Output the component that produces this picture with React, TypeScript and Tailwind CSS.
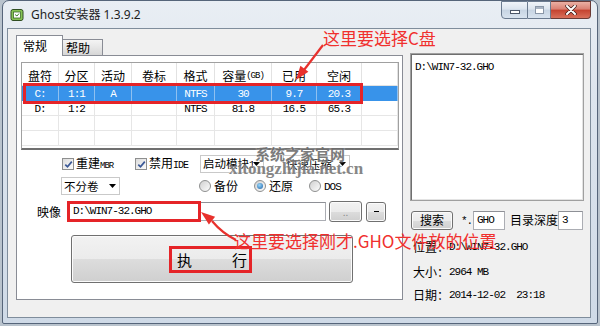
import React from "react";

const mono = "font-['Liberation_Mono',monospace] tracking-[-1px]";
const btn =
  "border border-[#707070] rounded-[3px] bg-[linear-gradient(to_bottom,#f2f2f2_0%,#ebebeb_50%,#dddddd_50%,#cfcfcf_100%)] shadow-[inset_0_0_0_1px_#fbfbfb]";
const input = "bg-white border border-[#abadb3] border-t-[#8e9096]";

function M({ children }: { children: React.ReactNode }) {
  return <span className={mono + " text-[11px]"}>{children}</span>;
}

function Check({ label }: { label: React.ReactNode }) {
  return (
    <div className="flex items-center">
      <div className="w-[12px] h-[12px] border border-[#8e8f8f] bg-[linear-gradient(135deg,#dcdcdc,#fbfbfb)] flex items-center justify-center">
        <svg width="9" height="9" viewBox="0 0 9 9">
          <path d="M1.3 4.6 L3.5 6.8 L7.8 1.6" stroke="#3a5896" strokeWidth="1.7" fill="none" />
        </svg>
      </div>
      <span className="ml-[2px] leading-[14px]">{label}</span>
    </div>
  );
}

function Drop({ className, label }: { className: string; label: React.ReactNode }) {
  return (
    <div className={"h-[18px] bg-white border border-[#c9c9c9] flex items-center pl-[2px] pr-[3px] text-[11.5px] " + className}>
      <span className="flex-1 leading-[14px] whitespace-nowrap overflow-hidden">{label}</span>
      <svg width="7" height="4" viewBox="0 0 7 4" className="shrink-0">
        <path d="M0 0H7L3.5 4Z" fill="#000" />
      </svg>
    </div>
  );
}

function Radio({ checked, label }: { checked?: boolean; label: React.ReactNode }) {
  return (
    <div className="flex items-center w-[55px]">
      <div className="w-[12px] h-[12px] rounded-full border border-[#8e8f8f] bg-[linear-gradient(135deg,#d0d0d0,#fdfdfd)] flex items-center justify-center">
        {checked && (
          <div className="w-[6px] h-[6px] rounded-full bg-[radial-gradient(circle_at_40%_35%,#9ad8fb,#1a5fa6)]" />
        )}
      </div>
      <span className="ml-[3px] leading-[14px]">{label}</span>
    </div>
  );
}

const rows: string[][] = [
  ["C:", "1:1", "A", "", "NTFS", "30", "9.7", "20.3", ""],
  ["D:", "1:2", "", "", "NTFS", "81.8", "16.5", "65.3", ""],
  ["", "", "", "", "", "", "", "", ""],
  ["", "", "", "", "", "", "", "", ""],
];

export default function App() {
  return (
    <div className="w-[600px] h-[326px] relative overflow-hidden bg-[#b9c3cd] text-black font-['Noto_Sans_CJK_SC','Noto_Sans',sans-serif]">
      <div className="ml-[2px] w-[596px] h-[324px] border border-[#56657a] rounded-t-[7px] rounded-b-[2px] bg-[linear-gradient(to_bottom,#e9eef4,#dde5ee_30%,#cfdae7)] flex flex-col">
        {/* title bar */}
        <div className="h-[27px] flex items-start">
          <div className="flex items-center h-[27px] pl-[7px] gap-[7px]">
            <svg width="14" height="14" viewBox="0 0 14 14">
              <rect x="1" y="1.5" width="12" height="11" rx="2" fill="#86c454" stroke="#2f4d22" strokeWidth="1" />
              <rect x="3.5" y="4" width="7" height="6" fill="#ffffff" stroke="#3d6a2a" strokeWidth="0.8" />
              <path d="M5 6.5 L7 8 L9 5.5" stroke="#3d8a2a" strokeWidth="1" fill="none" />
            </svg>
            <span className="text-[12px] leading-[16px] text-[#1e1e1e] font-['Noto_Sans','Noto_Sans_CJK_SC',sans-serif]">
              Ghost安装器 1.3.9.2
            </span>
          </div>
          <div className="ml-auto mr-[6px] flex">
            <div className="w-[27px] h-[18px] border border-[#6a7a8f] rounded-bl-[4px] bg-[linear-gradient(to_bottom,#f0f4f9,#dbe4ee_45%,#c7d4e3_50%,#d8e3ef)] flex items-center justify-center">
              <div className="w-[10px] h-[4px] mt-[4px] bg-white border border-[#4b5668]" />
            </div>
            <div className="w-[23px] h-[18px] border border-l-0 border-[#6a7a8f] bg-[linear-gradient(to_bottom,#f0f4f9,#dbe4ee_45%,#c7d4e3_50%,#d8e3ef)] flex items-center justify-center">
              <div className="w-[9px] h-[8px] border border-[#8a97a8] bg-white shadow-[inset_0_2px_0_#aab5c4]" />
            </div>
            <div className="w-[40px] h-[18px] border border-l-0 border-[#6b3a35] rounded-br-[4px] bg-[linear-gradient(to_bottom,#eab0a4,#d98072_45%,#c4422f_50%,#d9705b)] flex items-center justify-center">
              <svg width="12" height="10" viewBox="0 0 12 10">
                <path d="M2 1 L10 9 M10 1 L2 9" stroke="#3a1a16" strokeWidth="3.4" strokeLinecap="round" />
                <path d="M2 1 L10 9 M10 1 L2 9" stroke="#ffffff" strokeWidth="2" strokeLinecap="round" />
              </svg>
            </div>
          </div>
        </div>

        {/* client */}
        <div className="ml-[4px] w-[584px] h-[290px] border border-[#7f8d9c] bg-[#f0f0f0] flex text-[12px]">
          {/* left column */}
          <div className="ml-[8px] pt-[6px] w-[387px] flex flex-col">
            <div className="flex items-end h-[20px]">
              <div className="w-[47px] h-[21px] -mb-px bg-white border border-b-0 border-[#898c95] relative z-10 pl-[6px] leading-[20px]">
                常规
              </div>
              <div className="w-[40px] h-[16px] border border-l-0 border-b-0 border-[#898c95] bg-[linear-gradient(to_bottom,#f4f4f4,#e6e6e6_50%,#d6d6d6)] pl-[3px] leading-[15px]">
                帮助
              </div>
            </div>
            <div className="h-[245px] border border-[#898c95] bg-white flex flex-col">
              {/* table */}
              <div className="mt-[6px] ml-[4px] w-[378px] h-[88px] border-t border-l border-r border-[#a0a0a0] border-b-2 border-b-[#6f6f6f] bg-white">
                <div className="grid grid-cols-[37px_36px_37px_45px_38px_57px_45px_45px_1fr] h-[23px] border-b border-[#e2e2e2]">
                  {["盘符", "分区", "活动", "卷标", "格式", "容量", "已用", "空闲", ""].map((h, i) => (
                    <div key={i} className="flex items-center justify-center pt-[3px] border-r border-[#e2e2e2] leading-[14px]">
                      {h}
                      {i === 5 && <span className={mono + " text-[9px]"}>(GB)</span>}
                    </div>
                  ))}
                </div>
                {rows.map((r, ri) => (
                  <div
                    key={ri}
                    className={
                      ri === 0
                        ? "grid grid-cols-[37px_36px_37px_45px_38px_57px_45px_45px_1fr] h-[15px] bg-[#3893ea] text-white"
                        : "grid grid-cols-[37px_36px_37px_45px_38px_57px_45px_45px_1fr] h-[15px] border-b border-[#e6e6e6]"
                    }
                  >
                    {r.map((c, ci) => (
                      <div
                        key={ci}
                        className={
                          ri === 0
                            ? "flex items-center justify-center border-r border-[#8fc0f0]"
                            : "flex items-center justify-center border-r border-[#e6e6e6]"
                        }
                      >
                        <M>{c}</M>
                      </div>
                    ))}
                  </div>
                ))}
              </div>

              {/* row A */}
              <div className="mt-[5px] h-[18px] flex items-center">
                <div className="ml-[45px] w-[73px]">
                  <Check label={<>重建<span className={mono + " text-[9px]"}>MBR</span></>} />
                </div>
                <div className="w-[65px]">
                  <Check label={<>禁用<span className={mono + " text-[10px]"}>IDE</span></>} />
                </div>
                <Drop className="w-[64px]" label={<>启动模块<span className={mono + " text-[10px]"}>1</span></>} />
                <Drop className="ml-[19px] w-[67px]" label="快速压缩" />
              </div>

              {/* row B */}
              <div className="mt-[4px] h-[18px] flex items-center">
                <Drop className="ml-[44px] w-[59px]" label="不分卷" />
                <div className="ml-[79px] flex">
                  <Radio label="备份" />
                  <Radio checked label="还原" />
                  <Radio label={<span className={mono + " text-[11px]"}>DOS</span>} />
                </div>
              </div>

              {/* row C */}
              <div className="mt-[6px] h-[21px] flex items-center">
                <span className="ml-[20px] w-[30px] leading-[14px]">映像</span>
                <div className={input + " h-[19px] w-[259px] flex items-center pl-[5px]"}>
                  <M>{"D:\\WIN7-32.GHO"}</M>
                </div>
                <div className={btn + " ml-[3px] w-[33px] h-[21px] flex items-center justify-center text-[#8a8a8a] text-[10px] leading-none"}>
                  ..
                </div>
                <div className={btn + " ml-[4px] w-[20px] h-[20px] flex items-center justify-center leading-none"}>
                  <div className="w-[5px] h-[1px] bg-black" />
                </div>
              </div>

              {/* row D */}
              <div className={btn + " mt-[13px] ml-[54px] w-[282px] h-[48px] flex items-center text-[15px] leading-[18px]"}>
                <span className="ml-[105px] pt-[2px]">执</span>
                <span className="ml-[40px] pt-[2px]">行</span>
              </div>
            </div>
          </div>

          {/* right column */}
          <div className="ml-[7px] w-[174px] pt-[24px] flex flex-col">
            <div className="h-[148px] w-[174px] bg-white border border-[#a0a0a0] shadow-[inset_1px_1px_0_#6f6f6f,inset_-1px_-1px_0_#e3e3e3] pl-[4px] pt-[4px] leading-[13px]">
              <M>{"D:\\WIN7-32.GHO"}</M>
            </div>
            <div className="mt-[9px] h-[20px] flex items-center">
              <div className={btn + " ml-[1px] w-[42px] h-[19px] flex items-center justify-center leading-[14px]"}>搜索</div>
              <span className="w-[20px] pl-[8px]">
                <M>*.</M>
              </span>
              <div className={input + " w-[32px] h-[19px] flex items-center pl-[3px]"}>
                <M>GHO</M>
              </div>
              <span className="ml-[5px] w-[48px] leading-[14px]">目录深度</span>
              <div className={input + " w-[25px] h-[19px] flex items-center pl-[3px]"}>
                <M>3</M>
              </div>
            </div>
            <div className="mt-[10px] ml-[3px] h-[14px] flex items-center leading-[14px]">
              位置：<M>{"D:\\WIN7-32.GHO"}</M>
            </div>
            <div className="mt-[11px] ml-[3px] h-[14px] flex items-center leading-[14px]">
              大小：<M>2964 MB</M>
            </div>
            <div className="mt-[9px] ml-[3px] h-[14px] flex items-center leading-[14px] whitespace-pre">
              日期：<M>{"2014-12-02  23:18"}</M>
            </div>
          </div>
        </div>
      </div>

      {/* watermark */}
      <div className="absolute left-[255px] top-[145px] text-[15px] leading-[18px] font-bold text-[#6e6e6e] opacity-90 [text-shadow:0_0_2px_#ffffff]">
        系统之家官网
      </div>
      <div className="absolute left-[229px] top-[160px] text-[17px] leading-[18px] font-bold font-['Liberation_Serif',serif] text-[#7a7a7a] opacity-90 [text-shadow:0_0_2px_#ffffff]">
        xitongzhijia.net.cn
      </div>

      {/* red boxes */}
      <div className="absolute left-[23px] top-[83px] w-[340px] h-[21px] border-[3px] border-[#e52428]" />
      <div className="absolute left-[67px] top-[201px] w-[134px] h-[21px] border-[3px] border-[#e52428]" />
      <div className="absolute left-[169px] top-[246px] w-[83px] h-[27px] border-[3px] border-[#e52428]" />

      {/* annotations */}
      <div className="absolute left-[323px] top-[27px] text-[17px] leading-[22px] text-[#f0302e] whitespace-nowrap">
        这里要选择C盘
      </div>
      <div className="absolute left-[234px] top-[230px] text-[17px] leading-[22px] text-[#f0302e] whitespace-nowrap">
        这里要选择刚才.GHO文件放的位置
      </div>
      <svg className="absolute left-0 top-0 pointer-events-none" width="600" height="326" viewBox="0 0 600 326">
        <path d="M323 45 L304 70" stroke="#e8312d" strokeWidth="2.2" fill="none" />
        <path d="M296 80 L300.4 65.8 L308.4 71.8 Z" fill="#e8312d" />
        <path d="M236 240 Q222 233 212 221" stroke="#e8312d" strokeWidth="2.2" fill="none" />
        <path d="M201 212 L215.1 216.8 L208.9 224.6 Z" fill="#e8312d" />
      </svg>
    </div>
  );
}
